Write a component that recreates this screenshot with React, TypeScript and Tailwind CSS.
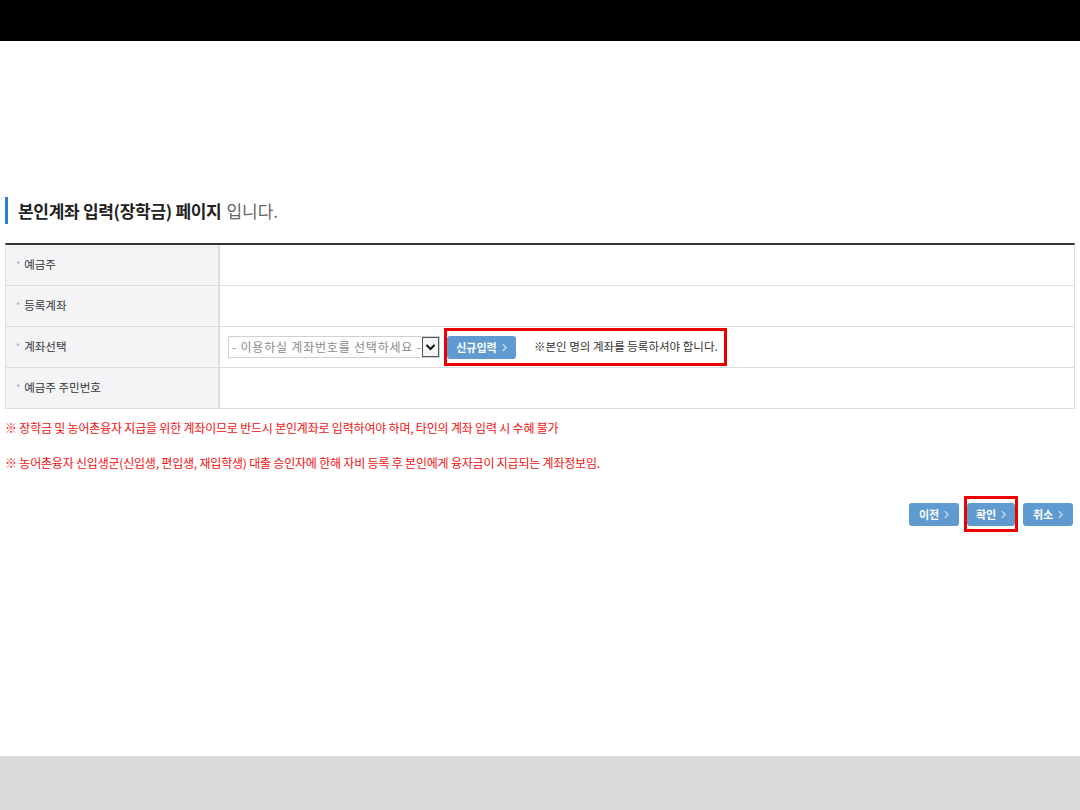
import React from 'react';

const font = { fontFamily: '"Noto Sans CJK KR", "Noto Sans", sans-serif' };

const rows = [
  { id: 'owner', label: '예금주' },
  { id: 'account', label: '등록계좌' },
  { id: 'select', label: '계좌선택' },
  { id: 'ssn', label: '예금주 주민번호' },
];

const Chevron: React.FC<{ className?: string }> = ({ className }) => (
  <svg viewBox="0 0 6 10" className={className} fill="none" stroke="currentColor" strokeWidth="1.3">
    <path d="M1 1l4 4-4 4" />
  </svg>
);

const BlueButton: React.FC<{ label: string; width: string }> = ({ label, width }) => (
  <button
    className={`${width} h-[23px] rounded-[3px] bg-[#5f9bd0] text-white text-[11px] font-semibold flex items-center justify-center gap-[5px]`}
  >
    <span>{label}</span>
    <Chevron className="w-[5px] h-[9px] text-[#d8e8f6]" />
  </button>
);

const AccountSelect: React.FC = () => (
  <div className="w-[212px] h-[22px] border border-[#d0d0d0] bg-white flex items-center justify-between pl-[3px]">
    <span className="text-[12px] text-[#8a8a8a] tracking-[0.8px] whitespace-nowrap">- 이용하실 계좌번호를 선택하세요 -</span>
    <div className="w-[17px] h-[20px] border border-[#555] bg-[#f4f4f4] flex items-center justify-center">
      <svg viewBox="0 0 10 8" className="w-[11px] h-[8px]" fill="none" stroke="#111" strokeWidth="2">
        <path d="M1 2l4 4 4-4" />
      </svg>
    </div>
  </div>
);

export default function App() {
  return (
    <div className="w-[1080px] h-[810px] bg-white flex flex-col" style={font}>
      <div className="h-[41px] bg-black shrink-0" />

      <main className="flex-1 pt-[156px]">
        {/* Title */}
        <div className="ml-[5px] h-[27px] border-l-[3px] border-[#2b7fd4] pl-[10px] flex items-center">
          <span className="text-[17px] font-bold text-[#222] tracking-[-0.3px]">본인계좌 입력(장학금) 페이지</span>
          <span className="text-[17px] text-[#666] ml-[5px]">입니다.</span>
        </div>

        {/* Form table */}
        <div className="mt-[19px] mx-[5px] w-[1070px] border-t-2 border-t-[#333] border-x border-x-[#ddd]">
          {rows.map((row) => (
            <div key={row.id} className="flex h-[41px] border-b border-[#ddd]">
              <div className="w-[214px] shrink-0 bg-[#f4f4f7] border-r-2 border-[#ddd] flex items-center pl-[10px] text-[11.5px] text-[#333]">
                <span className="text-[#8fb5dc] text-[9px] mr-[4px]">*</span>
                {row.label}
              </div>
              <div className="flex-1 flex items-center pl-[8px]">
                {row.id === 'select' && (
                  <>
                    <AccountSelect />
                    <div className="ml-[4px] w-[283px] h-[38px] border-[3px] border-[#ee0000] flex items-center">
                      <BlueButton label="신규입력" width="w-[69px]" />
                      <span className="ml-[18px] text-[11.5px] text-[#333] whitespace-nowrap">※본인 명의 계좌를 등록하셔야 합니다.</span>
                    </div>
                  </>
                )}
              </div>
            </div>
          ))}
        </div>

        {/* Notes */}
        <div className="mt-[11px] ml-[5px] flex flex-col gap-[19px] text-[12px] leading-[16px] text-[#f01010] tracking-[-0.2px]">
          <p>※ 장학금 및 농어촌융자 지급을 위한 계좌이므로 반드시 본인계좌로 입력하여야 하며, 타인의 계좌 입력 시 수혜 불가</p>
          <p>※ 농어촌융자 신입생군(신입생, 편입생, 재입학생) 대출 승인자에 한해 자비 등록 후 본인에게 융자금이 지급되는 계좌정보임.</p>
        </div>

        {/* Buttons */}
        <div className="mt-[25px] pr-[7px] flex justify-end items-center gap-[5px]">
          <BlueButton label="이전" width="w-[50px]" />
          <div className="w-[54px] h-[36px] border-[3px] border-[#ee0000] flex items-center justify-center">
            <BlueButton label="확인" width="w-[48px]" />
          </div>
          <BlueButton label="취소" width="w-[50px]" />
        </div>
      </main>

      <div className="h-[54px] bg-[#d9d9d9] shrink-0" />
    </div>
  );
}
